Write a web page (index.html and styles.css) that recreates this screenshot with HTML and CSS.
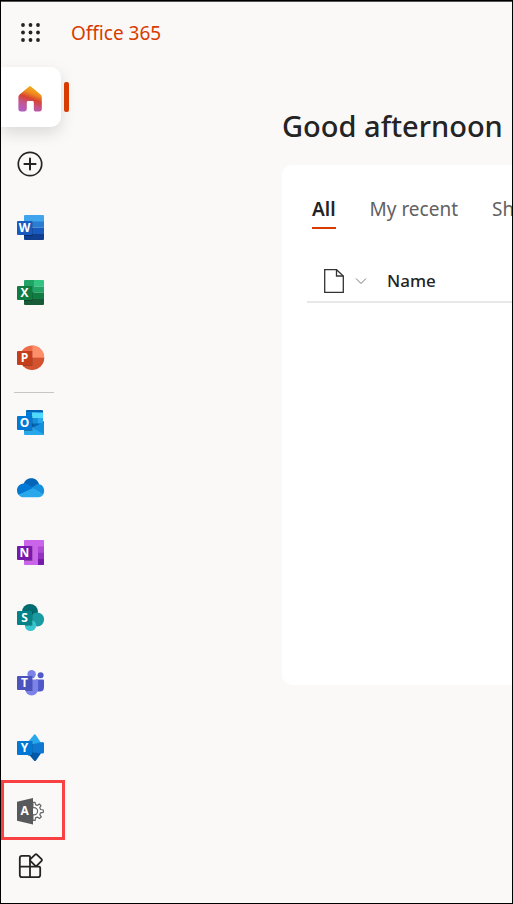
FILE: index.html
```html
<!DOCTYPE html>
<html lang="en">
<head>
<meta charset="utf-8">
<meta name="viewport" content="width=device-width, initial-scale=1">
<title>Office 365</title>
<link rel="stylesheet" href="styles.css">
</head>
<body>
<div class="app">
  <header class="topbar">
    <button class="launcher" type="button" aria-label="App launcher">
      <svg width="20" height="20" viewBox="0 0 20 20" fill="#242424"><circle cx="2" cy="2" r="1.9"/><circle cx="9.5" cy="2" r="1.9"/><circle cx="17" cy="2" r="1.9"/><circle cx="2" cy="9.5" r="1.9"/><circle cx="9.5" cy="9.5" r="1.9"/><circle cx="17" cy="9.5" r="1.9"/><circle cx="2" cy="17" r="1.9"/><circle cx="9.5" cy="17" r="1.9"/><circle cx="17" cy="17" r="1.9"/></svg>
    </button>
    <a class="brand" href="#">Office 365</a>
  </header>

  <div class="layout">
    <nav class="rail" aria-label="Apps">
      <a class="rail-item current" href="#" aria-label="Home" aria-current="page">
        <svg class="icon" viewBox="0 0 28 27">
          <defs><linearGradient id="home" x1="0.65" y1="0" x2="0.3" y2="1"><stop offset="0.05" stop-color="#f5ad1c"/><stop offset="0.28" stop-color="#ee8a20"/><stop offset="0.48" stop-color="#d84330"/><stop offset="0.72" stop-color="#c35590"/><stop offset="1" stop-color="#b35cc0"/></linearGradient></defs>
          <path fill="url(#home)" d="M12.1 2.4Q13 1.6 13.9 2.4L23.6 10.4Q24.8 11.4 24.8 13V24.8Q24.8 27.4 22.2 27.4H18.4Q16.8 27.4 16.8 25.8V18.4Q16.8 17 15.4 17H11.2Q9.8 17 9.8 18.4V25Q9.8 27.4 7.4 27.4H4Q1.4 27.4 1.4 24.8V13Q1.4 11.4 2.6 10.4Z"/>
        </svg>
      </a>
      <a class="rail-item" href="#" aria-label="Create">
        <svg class="icon" viewBox="0 0 28 27" fill="none" stroke="#242424" stroke-width="1.7" stroke-linecap="round"><circle cx="13" cy="14" r="11.7"/><path d="M13 8.4V19.6M7.4 14H18.6" stroke-width="2"/></svg>
      </a>
      <a class="rail-item" href="#" aria-label="Word">
        <svg class="icon" viewBox="0 0 28 27"><path fill="#41a5ee" d="M8 0H26Q27 0 27 1V7H7V1Q7 0 8 0Z"/><path fill="#2b7cd3" d="M7 6.5H27V12.5H7Z"/><path fill="#185abd" d="M7 12.5H27V19H7Z"/><path fill="#103f91" d="M7 19H27V24Q27 25 26 25H8Q7 25 7 24Z"/><path fill="#000" fill-opacity=".25" d="M7 6H15.5V21H7Z"/><rect y="6" width="15" height="14" rx="1" fill="#185abd"/><text class="letter" x="7.5" y="17">W</text></svg>
      </a>
      <a class="rail-item" href="#" aria-label="Excel">
        <svg class="icon" viewBox="0 0 28 27"><path fill="#21a366" d="M8 0H17V13H7V1Q7 0 8 0Z"/><path fill="#33c481" d="M17 0H26Q27 0 27 1V6.5H17Z"/><path fill="#21a366" d="M17 6.5H27V12.5H17Z"/><path fill="#107c41" d="M7 12.5H27V19H7Z"/><path fill="#185c37" d="M7 19H27V24Q27 25 26 25H8Q7 25 7 24Z"/><path fill="#000" fill-opacity=".25" d="M7 6H15.5V21H7Z"/><rect y="6" width="15" height="14" rx="1" fill="#107c41"/><text class="letter" x="7.5" y="17">X</text></svg>
      </a>
      <a class="rail-item" href="#" aria-label="PowerPoint">
        <svg class="icon" viewBox="0 0 28 27"><circle cx="15" cy="12.7" r="12.2" fill="#ed6c47"/><path fill="#ff8f6b" d="M15.5 .5A12 12.3 0 0 1 27.2 12.7H15.5Z"/><path fill="#d35230" d="M2.8 12.7H27.2A12.2 12.2 0 0 1 2.8 12.7Z"/><path fill="#000" fill-opacity=".22" d="M4 6H15.5V21H6Z"/><rect y="6" width="15" height="14" rx="1" fill="#c43e1c"/><text class="letter" x="7.5" y="17">P</text></svg>
      </a>
      <hr class="divider">
      <a class="rail-item" href="#" aria-label="Outlook">
        <svg class="icon" viewBox="0 0 28 27"><path fill="#0a2767" d="M25 10L27 12V16H22Z"/><path fill="#0364b8" d="M10 0H25Q26 0 26 1V15H9V1Q9 0 10 0Z"/><path fill="#28a8ea" d="M9 2.5H20.5V8H9Z"/><path fill="#50d9ff" d="M15 2.5H26V8H15Z"/><path fill="#0078d4" d="M9 2.5H15V14H9Z"/><path fill="#1490df" d="M15 8H20.5V14H15Z"/><path fill="#28a8ea" d="M20.5 8H26V14H20.5Z"/><path fill="#0364b8" d="M9 13.5H25L17 18.5Z"/><path fill="#1490df" d="M27 12V24Q27 25 26 25H8L15 18Z"/><path fill="#28a8ea" d="M7 13L27 24.3Q26.7 25 26 25H8Q7 25 7 24Z"/><path fill="#000" fill-opacity=".28" d="M7 6H15.5V21H7Z"/><rect y="6" width="15" height="14" rx="1" fill="#0078d4"/><text class="letter" x="7.5" y="17">O</text></svg>
      </a>
      <a class="rail-item" href="#" aria-label="OneDrive">
        <svg class="icon" viewBox="0 0 28 27"><path fill="#0364b8" d="M6.5 9.2C8.2 4.8 11.2 3.3 14.3 3.3C18.5 3.3 21.3 6 22 9.4L17 13.5Z"/><path fill="#0078d4" d="M6.8 8.6C2.5 8.7 0 12 0 15.4C0 17.2.7 18.9 1.8 20L17.2 13.3L12 10C10.5 9 8.7 8.6 6.8 8.6Z"/><path fill="#1490df" d="M21.6 9C19.5 9 18.2 9.9 16.5 11.5L14.5 12.6L26 19.8C28.8 15.7 26.4 9.3 21.6 9Z"/><path fill="#28a8ea" d="M1.7 19.9L16 13L26.2 19.6C25.1 21.4 23.5 22.2 21.6 22.2H6.7C4.7 22.2 3 21.4 1.7 19.9Z"/></svg>
      </a>
      <a class="rail-item" href="#" aria-label="OneNote">
        <svg class="icon" viewBox="0 0 28 27"><rect x="7" width="20" height="25" rx="1" fill="#ca64ea"/><path fill="#ae4bd5" d="M21 6.5H27V12.5H21Z"/><path fill="#9332bf" d="M21 12.5H27V19H21Z"/><path fill="#7719aa" d="M21 19H27V24Q27 25 26 25H21Z"/><path fill="#000" fill-opacity=".3" d="M7 6H15.5V21H7Z"/><rect y="6" width="15" height="14" rx="1" fill="#7719aa"/><text class="letter" x="7.5" y="17">N</text></svg>
      </a>
      <a class="rail-item" href="#" aria-label="SharePoint">
        <svg class="icon" viewBox="0 0 28 27"><circle cx="13" cy="7" r="8" fill="#036c70"/><circle cx="20.2" cy="14.5" r="6.9" fill="#1a9ba1"/><circle cx="13.5" cy="20.5" r="5.6" fill="#37c6d0"/><path fill="#000" fill-opacity=".25" d="M5 6H15.5V21H8Z"/><rect y="6" width="15" height="14" rx="1" fill="#038387"/><text class="letter" x="7.5" y="17">S</text></svg>
      </a>
      <a class="rail-item" href="#" aria-label="Teams">
        <svg class="icon" viewBox="0 0 28 27"><circle cx="23.6" cy="5.3" r="3" fill="#5059c9"/><path fill="#5059c9" d="M19 9.5H26Q27 9.5 27 10.5V17Q27 21.5 23 21.5H19Z"/><circle cx="14.6" cy="4.2" r="4.2" fill="#7b83eb"/><path fill="#7b83eb" d="M8 9.5H20.2Q21.2 9.5 21.2 10.5V18.8A6.6 6.8 0 0 1 8 18.8Z"/><path fill="#2f327c" fill-opacity=".55" d="M8 6H15.5V21H8.5Z"/><rect y="6" width="15" height="14" rx="1" fill="#4b53bc"/><text class="letter" x="7.5" y="17">T</text></svg>
      </a>
      <a class="rail-item" href="#" aria-label="Yammer">
        <svg class="icon" viewBox="0 0 28 27"><path fill="#28a8ea" d="M17.2 -.5Q18 -1 18.7 -.3L24.5 8.5L15 10L10.5 7.5Z"/><path fill="#0358a7" d="M15 16L24.5 17.5L19 25.5Q18 26.7 16.9 25.5L11 18.5Z"/><path fill="#1078d0" d="M12 10L25.5 7Q27 7 27 8.5V17Q27 18.7 25.5 18.5L12 17Z"/><path fill="#004880" fill-opacity=".5" d="M9 6H15.5V21H11Z"/><rect y="6" width="15" height="14" rx="1" fill="#0078d4"/><text class="letter" x="7.5" y="17">Y</text></svg>
      </a>
      <a class="rail-item highlighted" href="#" aria-label="Admin">
        <svg class="icon" viewBox="0 -1 28 27"><g fill="#fff" stroke="#666" stroke-width="1.2" stroke-linejoin="round"><path d="M15.9 4.3L18.1 4.3L18.5 6.6L20.4 7.4L22.3 6L24 7.7L22.7 9.6L23.5 11.5L26.3 12V14.3L23.6 14.8L22.8 16.7L24.3 18.8L22.5 20.5L20.4 19.1L18.5 19.9L18.1 22.4H15.9Z"/><circle cx="17" cy="13.2" r="3.6"/></g><path fill="#58595b" d="M0 3.7L16 0V26.5L0 22.8Z"/><text class="letter" x="7.6" y="17.3">A</text></svg>
      </a>
      <a class="rail-item apps" href="#" aria-label="All apps">
        <svg class="icon" viewBox="0 0 28 27" fill="none" stroke="#242424" stroke-width="1.8" stroke-linejoin="round"><path d="M13 3.8Q13 2.8 12 2.8H5Q2.8 2.8 2.8 5V22Q2.8 24.2 5 24.2H21Q23.2 24.2 23.2 22V15Q23.2 13.7 22 13.7H2.8M13 3V24"/><path fill="#faf9f8" d="M18.1 1.6Q19 .8 19.9 1.6L24.6 6.2Q25.4 7 24.6 7.9L19.9 12.6Q19 13.4 18.1 12.6L13.4 7.9Q12.6 7 13.4 6.2Z"/></svg>
      </a>
    </nav>

    <main class="content">
      <h1 class="greeting">Good afternoon</h1>
      <section class="card" aria-label="Files">
        <div class="tabs" role="tablist">
          <button class="tab selected" type="button" role="tab" aria-selected="true">All</button>
          <button class="tab" type="button" role="tab" aria-selected="false">My recent</button>
          <button class="tab" type="button" role="tab" aria-selected="false">Shared</button>
        </div>
        <table class="files">
          <thead>
            <tr>
              <th class="type-col" scope="col">
                <button class="type-filter" type="button" aria-label="File type">
                  <svg width="20" height="24" viewBox="0 0 20 24" fill="none" stroke="#333" stroke-width="1.3"><path d="M.7 .7H12.5L19.3 7V23.3H.7Z"/><path d="M12.5 .7V7H19.3"/></svg>
                  <svg width="12" height="8" viewBox="0 0 12 8" fill="none" stroke="#777" stroke-width="1"><path d="M1 1.5L6 6.5L11 1.5"/></svg>
                </button>
              </th>
              <th scope="col">Name</th>
            </tr>
          </thead>
        </table>
      </section>
    </main>
  </div>
</div>
</body>
</html>
```

FILE: styles.css
```css
* { box-sizing: border-box; }

body {
  margin: 0;
  background: #faf9f8;
  color: #242424;
  font-family: "Noto Sans", "Open Sans", sans-serif;
}

button {
  padding: 0;
  border: 0;
  background: none;
  color: inherit;
  font: inherit;
}

a { color: inherit; text-decoration: none; }

svg { display: block; }

.app {
  min-height: 100vh;
  border: 1px solid #000;
  box-shadow: inset 0 1px #555;
  overflow: hidden;
}

.topbar {
  display: flex;
  align-items: center;
  height: 66px;
  padding: 0 20px 3px;
  gap: 30px;
}

.brand {
  color: #d83b01;
  font-size: 19px;
  line-height: 24px;
}

.layout { display: flex; }

.rail {
  display: flex;
  flex: none;
  flex-direction: column;
  width: 72px;
}

.rail-item {
  display: flex;
  align-items: center;
  height: 65px;
  padding-left: 16px;
}

.icon {
  width: 28px;
  height: 27px;
  overflow: visible;
}

.letter {
  fill: #fff;
  font: 700 12px "Open Sans", sans-serif;
  text-anchor: middle;
}

.current {
  position: relative;
  width: 60px;
  height: 60px;
  margin-bottom: 4px;
  border-radius: 0 10px 10px 0;
  background: #fff;
  box-shadow: 0 6px 16px rgba(0, 0, 0, 0.13);
}

.current::after {
  content: "";
  position: absolute;
  top: 15px;
  left: 63px;
  width: 5px;
  height: 30px;
  border-radius: 2px;
  background: #d83b01;
}

.divider {
  width: 40px;
  height: 1px;
  margin: 1px 0 -2px 13px;
  border: 0;
  background: #c8c6c4;
}

.highlighted {
  width: 64px;
  height: 60px;
  margin-top: -1px;
  box-shadow: inset 0 0 0 3px #f94144;
}

.apps { height: 52px; }

.content {
  flex: 1;
  min-width: 0;
  padding: 39px 0 0 209px;
}

.greeting {
  margin: 0 0 19px;
  font-size: 29px;
  font-weight: 500;
  line-height: 40px;
  white-space: nowrap;
}

.card {
  min-height: 520px;
  padding: 29px 0 0 25px;
  border-radius: 10px 0 0 10px;
  background: #fff;
}

.tabs {
  display: flex;
  gap: 34px;
  padding-left: 5px;
  overflow: hidden;
}

.tab {
  flex: none;
  padding-bottom: 3px;
  border-bottom: 2px solid transparent;
  color: #616161;
  font-size: 19px;
  line-height: 30px;
}

.tab.selected {
  border-color: #d83b01;
  color: #242424;
  font-weight: 600;
}

.files {
  width: 100%;
  margin-top: 31px;
  border-collapse: collapse;
}

.files th {
  height: 42px;
  padding: 0;
  border-bottom: 2px solid #e8e8e8;
  font-size: 17px;
  font-weight: 500;
  line-height: 24px;
  text-align: left;
}

.files .type-col { width: 80px; }

.type-filter {
  display: flex;
  align-items: center;
  gap: 11px;
  padding-left: 17px;
}
```
